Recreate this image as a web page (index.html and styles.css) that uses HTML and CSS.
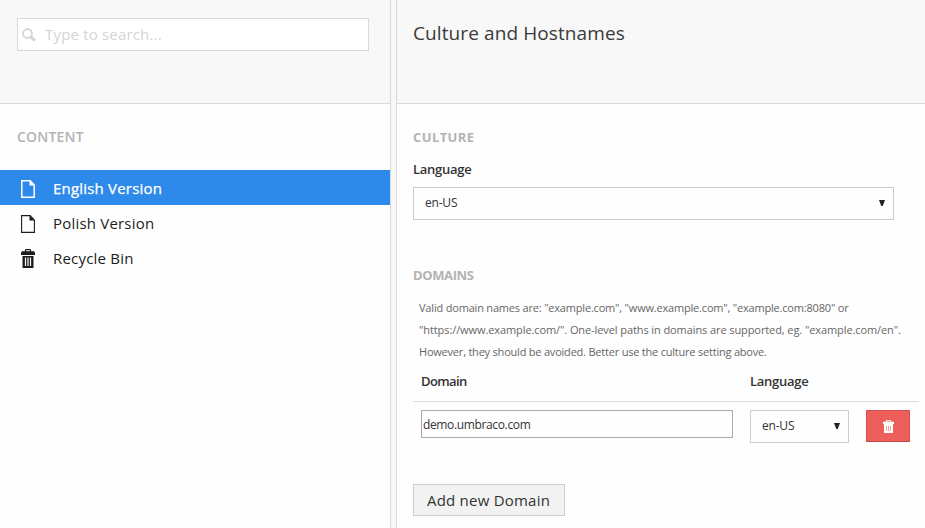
FILE: index.html
```html
<!DOCTYPE html>
<html lang="en">
<head>
<meta charset="utf-8">
<title>Culture and Hostnames</title>
<link rel="stylesheet" href="styles.css">
</head>
<body>
<div class="app">
  <aside class="tree">
    <header class="tree-header">
      <div class="search">
        <svg class="search-icon" width="14" height="14" viewBox="0 0 14 14"><circle cx="5.5" cy="5.5" r="4.5" fill="none" stroke="currentColor" stroke-width="1.8"/><path d="M8.6 8.6l4.3 4" fill="none" stroke="currentColor" stroke-width="3"/></svg>
        <span class="search-hint">Type to search...</span>
      </div>
    </header>
    <h2 class="tree-title">CONTENT</h2>
    <ul class="nodes">
      <li class="node active"><svg width="14" height="18" viewBox="0 0 14 18"><path d="M.8.8h8.4l4 4.2v12.2H.8z" fill="none" stroke="currentColor" stroke-width="1.5"/><path d="M8.5.5v5h5z" fill="currentColor"/></svg><span>English Version</span></li>
      <li class="node"><svg width="14" height="18" viewBox="0 0 14 18"><path d="M.6.6h8.6l4.2 4.3v12.5H.6z" fill="none" stroke="currentColor" stroke-width="1.1"/><path d="M8.5.5v5h5z" fill="currentColor"/></svg><span>Polish Version</span></li>
      <li class="node"><svg width="14" height="19" viewBox="0 0 14 19"><path d="M4.5 3V1.3q0-.6.8-.6h3.4q.8 0 .8.6V3" fill="none" stroke="currentColor" stroke-width="1.2"/><path d="M1 2.3h12l1 1.4V6H0V3.700z" fill="currentColor"/><path d="M1.500 7h11v12h-11z" fill="currentColor"/><path d="M4.500 8.500v8.500M7 8.500v8.500M9.500 8.500v8.500" stroke="#fefefe" stroke-width="1.200"/></svg><span>Recycle Bin</span></li>
    </ul>
  </aside>
  <main class="dialog">
    <header class="dialog-header"><h1>Culture and Hostnames</h1></header>
    <div class="body">
      <h2 class="section culture">CULTURE</h2>
      <div class="label">Language</div>
      <div class="select wide"><span>en-US</span><svg width="6" height="6" viewBox="0 0 6 6"><path d="M0 0h6L3.700 6H2.300z" fill="#222"/></svg></div>
      <h2 class="section domains">DOMAINS</h2>
      <p class="help"><span class="l1">Valid domain names are: "example.com", "www.example.com", "example.com:8080" or</span><br><span class="l2">"https://www.example.com/". One-level paths in domains are supported, eg. "example.com/en".</span><br><span class="l3">However, they should be avoided. Better use the culture setting above.</span></p>
      <div class="row head"><div class="label dom">Domain</div><div class="label">Language</div></div>
      <div class="row">
        <div class="input">demo.umbraco.com</div>
        <div class="select small"><span>en-US</span><svg width="6" height="6" viewBox="0 0 6 6"><path d="M0 0h6L3.700 6H2.300z" fill="#222"/></svg></div>
        <div class="delete"><svg width="11" height="13" viewBox="0 0 11 13"><path d="M3.3 2V.7h4.4V2" fill="none" stroke="#fff" stroke-width="1"/><path d="M0 1.700h11v2.300H0zM1 4h9v9H1z" fill="#fff"/><path d="M3.500 6v5M5.500 6v5M7.500 6v5" stroke="#f0a19f" stroke-width="1"/></svg></div>
      </div>
      <div class="add">Add new Domain</div>
    </div>
  </main>
</div>
</body>
</html>
```
FILE: styles.css
```css
* { box-sizing: border-box; }
body { margin: 0; font-family: "Open Sans", sans-serif; color: #333; background: #fefefe; }
h1, h2, p, ul { margin: 0; padding: 0; }
svg { display: block; flex: none; }
.app { display: grid; grid-template-columns: 391px 1fr; column-gap: 5px; width: 925px; height: 528px; background: #f8f8f8; overflow: hidden; }
.tree { border-right: 1px solid #d9d9d9; background: #fefefe; }
.dialog { border-left: 1px solid #d9d9d9; background: #fefefe; }
.tree-header, .dialog-header { height: 104px; background: #f8f8f8; border-bottom: 1px solid #d9d9d9; }
.tree-header { padding: 18px 0 0 17px; }
.search { display: flex; align-items: center; width: 352px; height: 33px; padding: 0 0 2px 4px; border: 1px solid #d9d9d9; background: #fff; color: #d5d5d5; font-size: 15px; letter-spacing: .18px; }
.search-icon { margin: 2px 9px 0 0; }
.tree-title { padding: 23px 0 0 17px; height: 66px; line-height: 20px; font-size: 14px; font-weight: 600; color: #b3b3b3; letter-spacing: .2px; }
.nodes { list-style: none; }
.node { display: flex; align-items: center; height: 35px; padding: 0 0 0 21px; gap: 18px; font-size: 15px; color: #1c1c1c; letter-spacing: .2px; }
.node svg { margin-top: 2px; }
.node.active { background: #2e8aea; color: #fff; -webkit-text-stroke: .25px #fff; }
.dialog-header { padding: 20px 0 0 16px; }
h1 { font-size: 19px; line-height: 27px; font-weight: 400; color: #3a3a3a; letter-spacing: .1px; }
.body { padding: 23px 0 0 16px; }
.section { line-height: 20px; font-size: 13px; font-weight: 700; color: #b3b3b3; letter-spacing: .4px; }
.label { line-height: 20px; font-size: 13px; font-weight: 600; letter-spacing: -.25px; }
.dom { letter-spacing: -.6px; }
.culture + .label { margin-top: 12px; }
.select { display: flex; align-items: center; justify-content: space-between; height: 33px; border: 1px solid #ccc; padding: 0 8px 2px 11px; font-size: 12px; letter-spacing: -.2px; }
.wide { width: 481px; margin-top: 8px; }
.domains { margin-top: 45px; letter-spacing: -.38px; }
.help { margin: 12px 0 0 6px; font-size: 11px; line-height: 22px; color: #666; white-space: nowrap; }
.l1 { letter-spacing: -.19px; }
.l2 { letter-spacing: -.09px; }
.l3 { letter-spacing: -.21px; }
.row { display: grid; grid-template-columns: 312px 99px 44px; column-gap: 17px; width: 506px; padding: 8px 0 0 8px; align-items: start; }
.head { height: 39px; border-bottom: 1px solid #ddd; }
.input { height: 28px; border: 1px solid #aaa; padding: 0 1px; font-size: 12px; line-height: 27px; letter-spacing: -.36px; }
.delete { display: flex; align-items: center; justify-content: center; height: 32px; background: #ee5f5b; border: 1px solid #d2514e; border-bottom-color: #b94a48; }
.add { margin-top: 41px; width: 152px; height: 32px; border: 1px solid #ccc; background: #f2f2f2; padding-left: 13px; font-size: 15px; line-height: 31px; white-space: nowrap; letter-spacing: .22px; }
```
